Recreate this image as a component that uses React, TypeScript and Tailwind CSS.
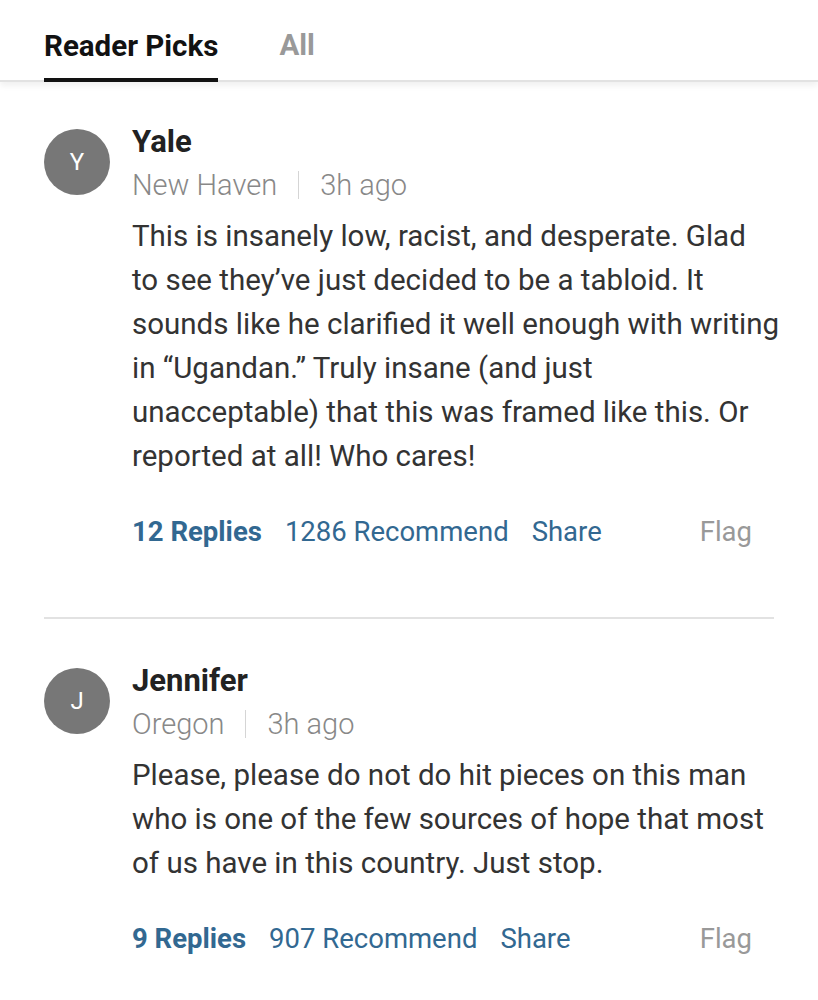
import React from "react";

type C = {
  initial: string;
  name: string;
  location: string;
  time: string;
  lines: string[];
  replies: string;
  recommend: string;
};

const comments: C[] = [
  {
    initial: "Y",
    name: "Yale",
    location: "New Haven",
    time: "3h ago",
    lines: [
      "This is insanely low, racist, and desperate. Glad",
      "to see they’ve just decided to be a tabloid. It",
      "sounds like he clarified it well enough with writing",
      "in “Ugandan.” Truly insane (and just",
      "unacceptable) that this was framed like this. Or",
      "reported at all! Who cares!",
    ],
    replies: "12 Replies",
    recommend: "1286 Recommend",
  },
  {
    initial: "J",
    name: "Jennifer",
    location: "Oregon",
    time: "3h ago",
    lines: [
      "Please, please do not do hit pieces on this man",
      "who is one of the few sources of hope that most",
      "of us have in this country. Just stop.",
    ],
    replies: "9 Replies",
    recommend: "907 Recommend",
  },
];

function Comment({ c, last }: { c: C; last?: boolean }) {
  return (
    <div className={last ? "pt-[45px]" : "pt-[43px] pb-[68px] border-b-2 border-[#e2e2e2]"}>
      <div className="flex">
        <div className="w-[66px] h-[66px] rounded-full bg-[#777777] text-white flex items-center justify-center text-[24px] mt-[4px] shrink-0">
          {c.initial}
        </div>
        <div className="ml-[22px] flex-1 min-w-0">
          <div className="text-[31px] font-bold text-[#222] leading-[34px]">{c.name}</div>
          <div className="flex items-center text-[29px] text-[#888] leading-[34px] mt-[9px] font-light">
            <span>{c.location}</span>
            <span className="mx-[21px] w-px h-[28px] bg-[#d5d5d5]" />
            <span>{c.time}</span>
          </div>
          <div className="mt-[12px] text-[29.5px] leading-[44px] text-[#333]">
            {c.lines.map((l, i) => (
              <div key={i} className="whitespace-nowrap">{l}</div>
            ))}
          </div>
          <div className="flex items-center mt-[37px] text-[27.5px] leading-[34px] text-[#326891]">
            <span className="font-bold">{c.replies}</span>
            <span className="ml-[23px]">{c.recommend}</span>
            <span className="ml-[23px]">Share</span>
            <span className="ml-auto text-[#999] mr-[22px]">Flag</span>
          </div>
        </div>
      </div>
    </div>
  );
}

export default function App() {
  return (
    <div className="w-[818px] h-[1000px] bg-white overflow-hidden" style={{ fontFamily: "Roboto, 'Liberation Sans', sans-serif" }}>
      <div className="border-b-2 border-[#e2e2e2] shadow-[0_4px_6px_rgba(0,0,0,0.06)] px-[44px] flex items-end h-[82px]">
        <div className="flex flex-col">
          <span className="text-[29.5px] font-bold text-[#121212] leading-[34px] mb-[15px]">Reader Picks</span>
          <span className="h-[4px] bg-[#121212] -mb-[2px]" />
        </div>
        <span className="ml-[61px] text-[29.5px] font-bold text-[#999] leading-[34px] mb-[18px]">All</span>
      </div>
      <div className="px-[44px]">
        <Comment c={comments[0]} />
        <Comment c={comments[1]} last />
      </div>
    </div>
  );
}
